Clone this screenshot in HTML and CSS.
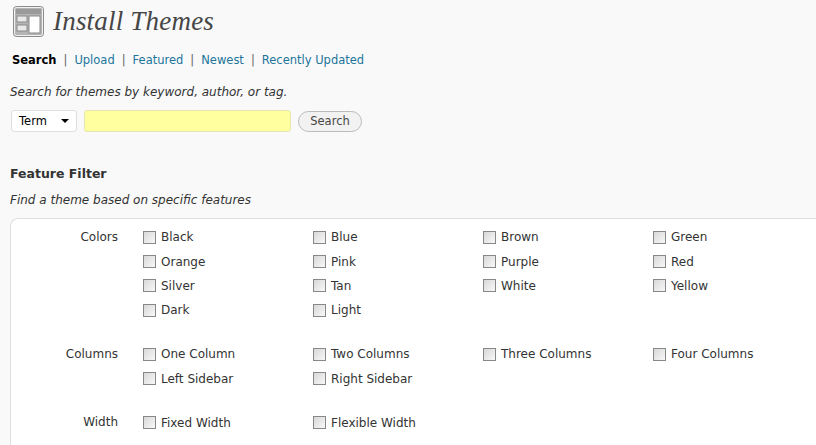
FILE: index.html
```html
<!DOCTYPE html>
<html lang="en">
<head>
<meta charset="utf-8">
<title>Install Themes</title>
<link rel="stylesheet" href="styles.css">
</head>
<body>
<div class="wrap">
  <header class="title-row">
    <svg class="icon" width="32" height="32" viewBox="0 0 32 32" aria-hidden="true">
      <rect x="0.5" y="0.5" width="30" height="30" rx="3" fill="#b5b5b5" stroke="#8c8c8c"/>
      <rect x="1.5" y="1.5" width="28" height="28" rx="2" fill="none" stroke="#f1f1f1"/>
      <rect x="3" y="3" width="25" height="5" fill="#9a9a9a"/>
      <rect x="4" y="10" width="10" height="6" fill="#e8e8e8" stroke="#8a8a8a"/>
      <rect x="4" y="19" width="10" height="6" fill="#e8e8e8" stroke="#8a8a8a"/>
      <rect x="16" y="10" width="11" height="17" fill="#fff" stroke="#8a8a8a"/>
    </svg>
    <h1 class="title">Install Themes</h1>
  </header>
  <ul class="subnav">
    <li class="current">Search</li>
    <li><a href="#">Upload</a></li>
    <li><a href="#">Featured</a></li>
    <li><a href="#">Newest</a></li>
    <li><a href="#">Recently Updated</a></li>
  </ul>
  <p class="hint search-hint">Search for themes by keyword, author, or tag.</p>
  <form class="search">
    <div class="select"><span>Term</span><i class="caret"></i></div>
    <input class="term" type="text">
    <button class="btn" type="button">Search</button>
  </form>
  <h2 class="filter-title">Feature Filter</h2>
  <p class="hint filter-hint">Find a theme based on specific features</p>
  <div class="box">
    <div class="group">
      <div class="name">Colors</div>
      <label class="opt"><input type="checkbox">Black</label>
      <label class="opt"><input type="checkbox">Blue</label>
      <label class="opt"><input type="checkbox">Brown</label>
      <label class="opt"><input type="checkbox">Green</label>
      <label class="opt first"><input type="checkbox">Orange</label>
      <label class="opt"><input type="checkbox">Pink</label>
      <label class="opt"><input type="checkbox">Purple</label>
      <label class="opt"><input type="checkbox">Red</label>
      <label class="opt first"><input type="checkbox">Silver</label>
      <label class="opt"><input type="checkbox">Tan</label>
      <label class="opt"><input type="checkbox">White</label>
      <label class="opt"><input type="checkbox">Yellow</label>
      <label class="opt first"><input type="checkbox">Dark</label>
      <label class="opt"><input type="checkbox">Light</label>
    </div>
    <div class="group">
      <div class="name">Columns</div>
      <label class="opt"><input type="checkbox">One Column</label>
      <label class="opt"><input type="checkbox">Two Columns</label>
      <label class="opt"><input type="checkbox">Three Columns</label>
      <label class="opt"><input type="checkbox">Four Columns</label>
      <label class="opt first"><input type="checkbox">Left Sidebar</label>
      <label class="opt"><input type="checkbox">Right Sidebar</label>
    </div>
    <div class="group">
      <div class="name">Width</div>
      <label class="opt"><input type="checkbox">Fixed Width</label>
      <label class="opt"><input type="checkbox">Flexible Width</label>
    </div>
  </div>
</div>
</body>
</html>
```
FILE: styles.css
```css
html, body { margin: 0; height: 445px; overflow: hidden; background: #f9f9f9; }
body { font-family: "DejaVu Sans", Verdana, sans-serif; font-size: 12px; color: #333; }
.wrap { padding: 4px 0 0 10px; }
.title-row { display: flex; align-items: center; gap: 8px; height: 35px; padding-left: 3px; }
.icon { display: block; flex: none; }
.title { margin: 0; font: italic 400 27px/35px "Liberation Serif", Georgia, serif; color: #464646; letter-spacing: 0.2px; }
.subnav { display: flex; list-style: none; margin: 13px 0 0 2px; padding: 0; font-size: 11.5px; line-height: 16px; color: #666; }
.subnav li + li::before { content: "|"; margin: 0 7px; color: #666; }
.subnav .current { color: #000; font-weight: 700; }
.subnav a { color: #21759b; text-decoration: none; }
.hint { margin: 0; font-style: italic; line-height: 16px; color: #333; }
.search-hint { margin-top: 16px; }
.search { display: flex; align-items: center; margin: 10px 0 0 1px; height: 22px; }
.select { display: flex; align-items: center; justify-content: space-between; box-sizing: border-box; width: 66px; height: 22px; padding: 0 7px; background: #fff; border: 1px solid #dfdfdf; border-radius: 3px; font-size: 11.5px; color: #000; }
.caret { width: 0; height: 0; border: 4px solid transparent; border-top-color: #000; border-bottom: 0; }
.term { box-sizing: border-box; width: 207px; height: 22px; margin: 0 7px 0 7px; padding: 0; background: #ffffa0; border: 1px solid #e6e6b0; border-radius: 3px; }
.btn { box-sizing: border-box; width: 64px; height: 21px; padding: 0; background: #f2f2f2; border: 1px solid #bbb; border-radius: 11px; font: 11.5px "DejaVu Sans", Verdana, sans-serif; color: #464646; }
.filter-title { margin: 34px 0 0; font-size: 12.5px; line-height: 16px; font-weight: 700; color: #333; }
.filter-hint { margin-top: 10px; }
.box { margin-top: 10px; padding: 6px 0 0; background: #fff; border: 1px solid #dfdfdf; border-right: 0; border-radius: 8px 0 0 8px; height: 300px; }
.group { display: grid; grid-template-columns: 107px repeat(4, 170px); grid-auto-rows: 24.4px; column-gap: 0; margin-bottom: 19.5px; }
.name { text-align: right; line-height: 24px; padding-right: 0; grid-row: 1; grid-column: 1; }
.opt { display: flex; align-items: center; line-height: 24px; padding-left: 25px; color: #333; }
.group > .opt:nth-child(2) { grid-column: 2; }
.first { grid-column: 2; }
.opt input { appearance: none; box-sizing: border-box; width: 13px; height: 13px; margin: 0 5px 0 0; flex: none; background: linear-gradient(135deg, #d8d8d8, #f8f8f8); border: 1px solid #888; }
```
